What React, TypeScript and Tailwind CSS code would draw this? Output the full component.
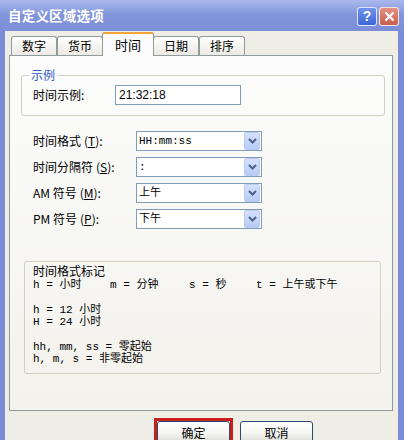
const cjk = "font-['Noto_Sans_CJK_SC',sans-serif]";
const mono = "font-['Liberation_Mono','Noto_Sans_CJK_SC',monospace]";

const tabs = [
  { name: "数字", w: "w-[46px]" },
  { name: "货币", w: "w-[46px]" },
  { name: "时间", w: "w-[52px]", active: true },
  { name: "日期", w: "w-[46px]" },
  { name: "排序", w: "w-[46px]" },
];

const combos = [
  { label: "时间格式", key: "T", value: "HH:mm:ss" },
  { label: "时间分隔符", key: "S", value: ":" },
  { label: "AM 符号", key: "M", value: "上午" },
  { label: "PM 符号", key: "P", value: "下午" },
];

const Chevron = () => (
  <div className="w-[16px] h-[18px] mr-[1px] rounded-[2px] border border-[#bccbf0] bg-gradient-to-b from-[#d6e1fd] to-[#b7caf7] flex items-center justify-center">
    <svg width="9" height="6" viewBox="0 0 9 6">
      <path d="M1 1 L4.5 4.5 L8 1" fill="none" stroke="#4d6185" strokeWidth="2" />
    </svg>
  </div>
);

const Combo = ({ value }: { value: string }) => (
  <div className="w-[126px] h-[20px] border border-[#7f9db9] bg-white flex items-center justify-between">
    <span className={`pl-[2px] text-[11px] text-black ${mono}`}>{value}</span>
    <Chevron />
  </div>
);

const XpButton = ({ label }: { label: string }) => (
  <div className={`w-[73px] h-[23px] rounded-[3px] border border-[#2c4a6e] bg-gradient-to-b from-[#ffffff] via-[#f6f6f3] to-[#dcdcd4] flex items-center justify-center text-[12px] text-black ${cjk}`}>
    {label}
  </div>
);

export default function App() {
  return (
    <div className="w-[404px] h-[440px] overflow-hidden bg-[#7b8dd6] flex flex-col relative">
      {/* title bar */}
      <div className="h-[31px] shrink-0 flex items-center pl-[8px] pr-[5px] bg-gradient-to-b from-[#aab8ec] via-[#8194db] to-[#7b8ed7]">
        <span className={`text-[13.5px] font-bold text-white tracking-[0.2px] ${cjk}`}>自定义区域选项</span>
        <div className="ml-auto flex gap-[2px] mt-[2px]">
          <div className="w-[20px] h-[19px] rounded-[3px] border border-white/80 bg-gradient-to-b from-[#6f92ea] to-[#3f66d6] flex items-center justify-center text-white text-[14px] font-bold font-['Liberation_Sans',sans-serif]">?</div>
          <div className="w-[20px] h-[19px] rounded-[3px] border border-white/80 bg-gradient-to-b from-[#e49182] to-[#c5604e] flex items-center justify-center">
            <svg width="11" height="11" viewBox="0 0 11 11">
              <path d="M1.5 1.5 L9.5 9.5 M9.5 1.5 L1.5 9.5" stroke="white" strokeWidth="2.2" />
            </svg>
          </div>
        </div>
      </div>

      {/* body */}
      <div className="flex-1 ml-[5px] mr-[6px] bg-[#efeee6] flex flex-col">
        {/* tabs */}
        <div className="h-[25px] flex items-end pl-[6px]">
          {tabs.map((t) =>
            t.active ? (
              <div
                key={t.name}
                className={`${t.w} h-[24px] -mx-[1px] relative z-10 rounded-t-[3px] border-x border-[#919b9c] border-t-2 border-t-[#f2a33a] bg-[#fcfcfc] flex items-start justify-center pt-[1px] text-[13px] text-black ${cjk}`}
              >
                {t.name}
              </div>
            ) : (
              <div
                key={t.name}
                className={`${t.w} h-[19px] mb-[1px] rounded-t-[3px] border-x border-t border-[#919b9c] bg-gradient-to-b from-[#ffffff] to-[#ebeae4] flex items-center justify-center text-[12px] text-black ${cjk}`}
              >
                {t.name}
              </div>
            )
          )}
        </div>

        {/* tab panel */}
        <div className="-mt-[1px] ml-[4px] w-[384px] h-[356px] border border-[#919b9c] bg-gradient-to-b from-[#fcfcfc] to-[#f3f2ec] flex flex-col">
          <fieldset className="mt-[12px] ml-[11px] w-[364px] h-[48px] border border-[#d0d0bf] rounded-[3px]">
            <legend className={`ml-[7px] px-[2px] text-[12px] leading-[14px] text-[#2f5bcf] ${cjk}`}>示例</legend>
            <div className="flex items-center pl-[11px] pt-[3px]">
              <span className={`w-[82px] text-[12px] text-black ${cjk}`}>时间示例:</span>
              <div className="w-[126px] h-[20px] border border-[#7f9db9] bg-white flex items-center">
                <span className="pl-[3px] text-[12px] text-black font-['Liberation_Sans',sans-serif]">21:32:18</span>
              </div>
            </div>
          </fieldset>

          <div className="mt-[15px] flex flex-col gap-[6px] pl-[23px]">
            {combos.map((c) => (
              <div key={c.key} className="flex items-center h-[20px]">
                <span className={`w-[103px] text-[12px] text-black ${cjk}`}>
                  {c.label}<span className="ml-[3px]">(</span><span className="underline">{c.key}</span>):
                </span>
                <Combo value={c.value} />
              </div>
            ))}
          </div>

          <div className={`mt-[32px] ml-[14px] w-[357px] h-[113px] border border-[#d0d0bf] rounded-[3px] pt-[5px] pl-[8px] text-[11px] leading-[12.3px] text-black whitespace-pre ${mono}`}>
            <div className="text-[12px]">时间格式标记</div>
            <div className="flex">
              <span className="w-[77px]">h = 小时</span>
              <span className="w-[79px]">m = 分钟</span>
              <span className="w-[67px]">s = 秒</span>
              <span>t = 上午或下午</span>
            </div>
            <div>&nbsp;</div>
            <div>h = 12 小时</div>
            <div>H = 24 小时</div>
            <div>&nbsp;</div>
            <div>hh, mm, ss = 零起始</div>
            <div>h, m, s = 非零起始</div>
          </div>
        </div>

        {/* buttons */}
        <div className="mt-[10px] ml-[152px] flex gap-[10px]">
          <div className="relative">
            <XpButton label="确定" />
            <div className="absolute -left-[3px] -top-[3px] w-[79px] h-[30px] border-[3px] border-[#c81e1e]" />
          </div>
          <XpButton label="取消" />
        </div>
      </div>
    </div>
  );
}
